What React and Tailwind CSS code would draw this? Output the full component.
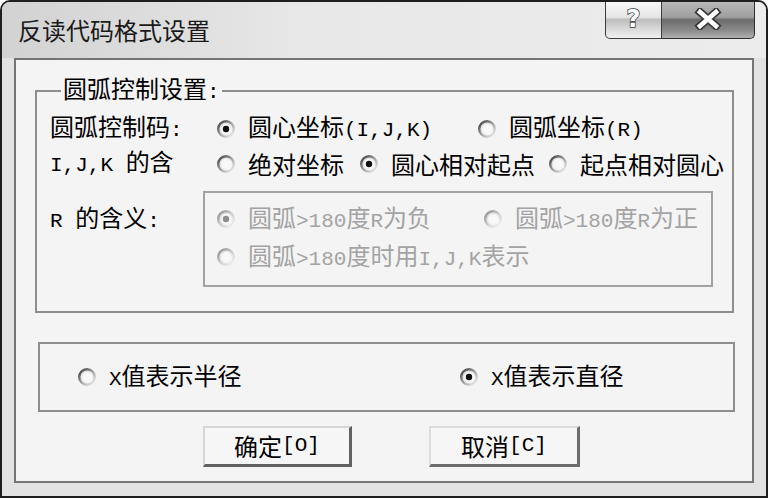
import React from "react";

const FONT = "font-['Noto_Sans_CJK_SC','Noto_Sans_CJK_JP',sans-serif]";

// latin runs in the dialog are half-width, so they get a mono face
function L({ children }) {
  return (
    <span className="font-['Liberation_Mono',monospace] text-[21px]">
      {children}
    </span>
  );
}

function Radio({ checked, disabled }) {
  const ring = disabled ? "rdRing" : "rRing";
  return (
    <svg width="18" height="18" viewBox="0 0 18 18" className="shrink-0">
      <defs>
        <linearGradient id="rRing" x1="0" y1="0" x2="1" y2="1">
          <stop offset="0" stopColor="#3a3a3a" />
          <stop offset="0.5" stopColor="#a0a0a0" />
          <stop offset="1" stopColor="#f6f6f6" />
        </linearGradient>
        <linearGradient id="rdRing" x1="0" y1="0" x2="1" y2="1">
          <stop offset="0" stopColor="#8a8a8a" />
          <stop offset="0.5" stopColor="#cccccc" />
          <stop offset="1" stopColor="#f6f6f6" />
        </linearGradient>
        <linearGradient id="rFill" x1="0" y1="0" x2="1" y2="1">
          <stop offset="0" stopColor="#d6d6d6" />
          <stop offset="1" stopColor="#ffffff" />
        </linearGradient>
      </defs>
      <circle cx="9" cy="9" r="7.8" fill="url(#rFill)" stroke={`url(#${ring})`} strokeWidth="2.4" />
      <circle cx="9" cy="9" r="5" fill="#f8f8f8" />
      {checked && <circle cx="9" cy="9" r="3.2" fill={disabled ? "#8e8e8e" : "#111"} />}
    </svg>
  );
}

function Opt({ checked, disabled, className = "", children }) {
  return (
    <div className={`flex items-center shrink-0 ${className}`}>
      <Radio checked={checked} disabled={disabled} />
      <span
        className={`ml-[13px] whitespace-nowrap ${
          disabled ? "text-[#a3a3a3]" : "text-black"
        }`}
      >
        {children}
      </span>
    </div>
  );
}

function CaptionButtons() {
  return (
    <div className="flex mr-[11px] -mt-[2px]">
      <div className="w-[57px] h-[39px] rounded-bl-[5px] border border-t-0 border-[#3c3c3c] bg-[linear-gradient(to_bottom,#fafafa_0%,#e6e6e6_45%,#bdbdbd_52%,#d8d8d8_75%,#f0f0f0_100%)] flex items-center justify-center">
        <span className="font-['DejaVu_Sans',sans-serif] font-bold text-[24px] leading-none text-white [-webkit-text-stroke:1.5px_#3a3a3a] [paint-order:stroke_fill]">
          ?
        </span>
      </div>
      <div className="w-[93px] h-[39px] rounded-br-[5px] border border-l-0 border-t-0 border-[#2e2e2e] bg-[linear-gradient(to_bottom,#b9b9b9_0%,#a0a0a0_45%,#6c6c6c_52%,#8a8a8a_80%,#b0b0b0_100%)] flex items-center justify-center">
        <svg width="30" height="22" viewBox="0 0 30 22">
          <path d="M7 4 L23 18 M23 4 L7 18" stroke="#3a3a3a" strokeWidth="8" strokeLinecap="square" />
          <path d="M7 4 L23 18 M23 4 L7 18" stroke="#ffffff" strokeWidth="4.5" strokeLinecap="square" />
        </svg>
      </div>
    </div>
  );
}

export default function App() {
  return (
    <div className={`w-[768px] h-[498px] bg-white ${FONT}`}>
      <div className="w-full h-full rounded-t-[10px] border-2 border-[#1e1e1e] bg-[#e2e2e2] flex flex-col overflow-hidden">
        {/* title bar */}
        <div className="h-[56px] shrink-0 flex items-start bg-[linear-gradient(to_right,#d2d2d2,#e8e8e8_40%,#ececec)]">
          <div className="pl-[16px] pt-[14px] text-[24px] leading-[28px] text-[#1a1a1a]">
            反读代码格式设置
          </div>
          <div className="ml-auto">
            <CaptionButtons />
          </div>
        </div>

        {/* client area */}
        <div className="flex-1 mx-[12px] mb-[13px] border-2 border-[#747474] bg-[#f4f4f4] flex flex-col text-[24px] leading-[24px] text-black">
          <fieldset className="ml-[19px] mt-[16px] w-[699px] border-2 border-[#8e8e8e] pl-[13px] pb-[24px]">
            <legend className="ml-[11px] px-[2px] leading-[24px]">
              圆弧控制设置<L>:</L>
            </legend>

            <div className="pt-[6px]">
              <div className="h-[35px] flex items-center">
                <div className="w-[167px] shrink-0">
                  圆弧控制码<L>:</L>
                </div>
                <Opt checked className="w-[261px]">
                  圆心坐标<L>(I,J,K)</L>
                </Opt>
                <Opt>
                  圆弧坐标<L>(R)</L>
                </Opt>
              </div>

              <div className="h-[35px] flex items-center">
                <div className="w-[167px] shrink-0">
                  <L>I,J,K </L>的含
                </div>
                <Opt className="w-[143px]">绝对坐标</Opt>
                <Opt checked className="w-[189px]">
                  圆心相对起点
                </Opt>
                <Opt>起点相对圆心</Opt>
              </div>
            </div>

            <div className="mt-[10px] flex items-start">
              <div className="w-[153px] shrink-0 pt-[9px] h-[47px] flex items-center">
                <span>
                  <L>R </L>的含义<L>:</L>
                </span>
              </div>
              <div className="w-[510px] border-2 border-[#a2a2a2] pl-[12px] pt-[7px] pb-[9px]">
                <div className="h-[38px] flex items-center">
                  <Opt checked disabled className="w-[267px]">
                    圆弧<L>&gt;180</L>度<L>R</L>为负
                  </Opt>
                  <Opt disabled>
                    圆弧<L>&gt;180</L>度<L>R</L>为正
                  </Opt>
                </div>
                <div className="h-[38px] flex items-center">
                  <Opt disabled>
                    圆弧<L>&gt;180</L>度时用<L>I,J,K</L>表示
                  </Opt>
                </div>
              </div>
            </div>
          </fieldset>

          <div className="ml-[22px] mt-[29px] w-[697px] h-[70px] border-2 border-[#8e8e8e] pl-[38px] flex items-center">
            <Opt className="w-[382px]">
              <L>X</L>值表示半径
            </Opt>
            <Opt checked>
              <L>X</L>值表示直径
            </Opt>
          </div>

          <div className="mt-[14px] ml-[187px] flex gap-[77px]">
            <button className="w-[149px] h-[41px] border-t-2 border-l-2 border-r-[3px] border-b-[3px] border-t-[#d6d6d6] border-l-[#d6d6d6] border-r-[#626262] border-b-[#626262] bg-[#f6f6f6] flex items-center justify-center">
              确定<L>[O]</L>
            </button>
            <button className="w-[151px] h-[41px] border-t-2 border-l-2 border-r-[3px] border-b-[3px] border-t-[#dcdcdc] border-l-[#dcdcdc] border-r-[#6c6c6c] border-b-[#6c6c6c] bg-[#f6f6f6] flex items-center justify-center">
              取消<L>[C]</L>
            </button>
          </div>
        </div>
      </div>
    </div>
  );
}
